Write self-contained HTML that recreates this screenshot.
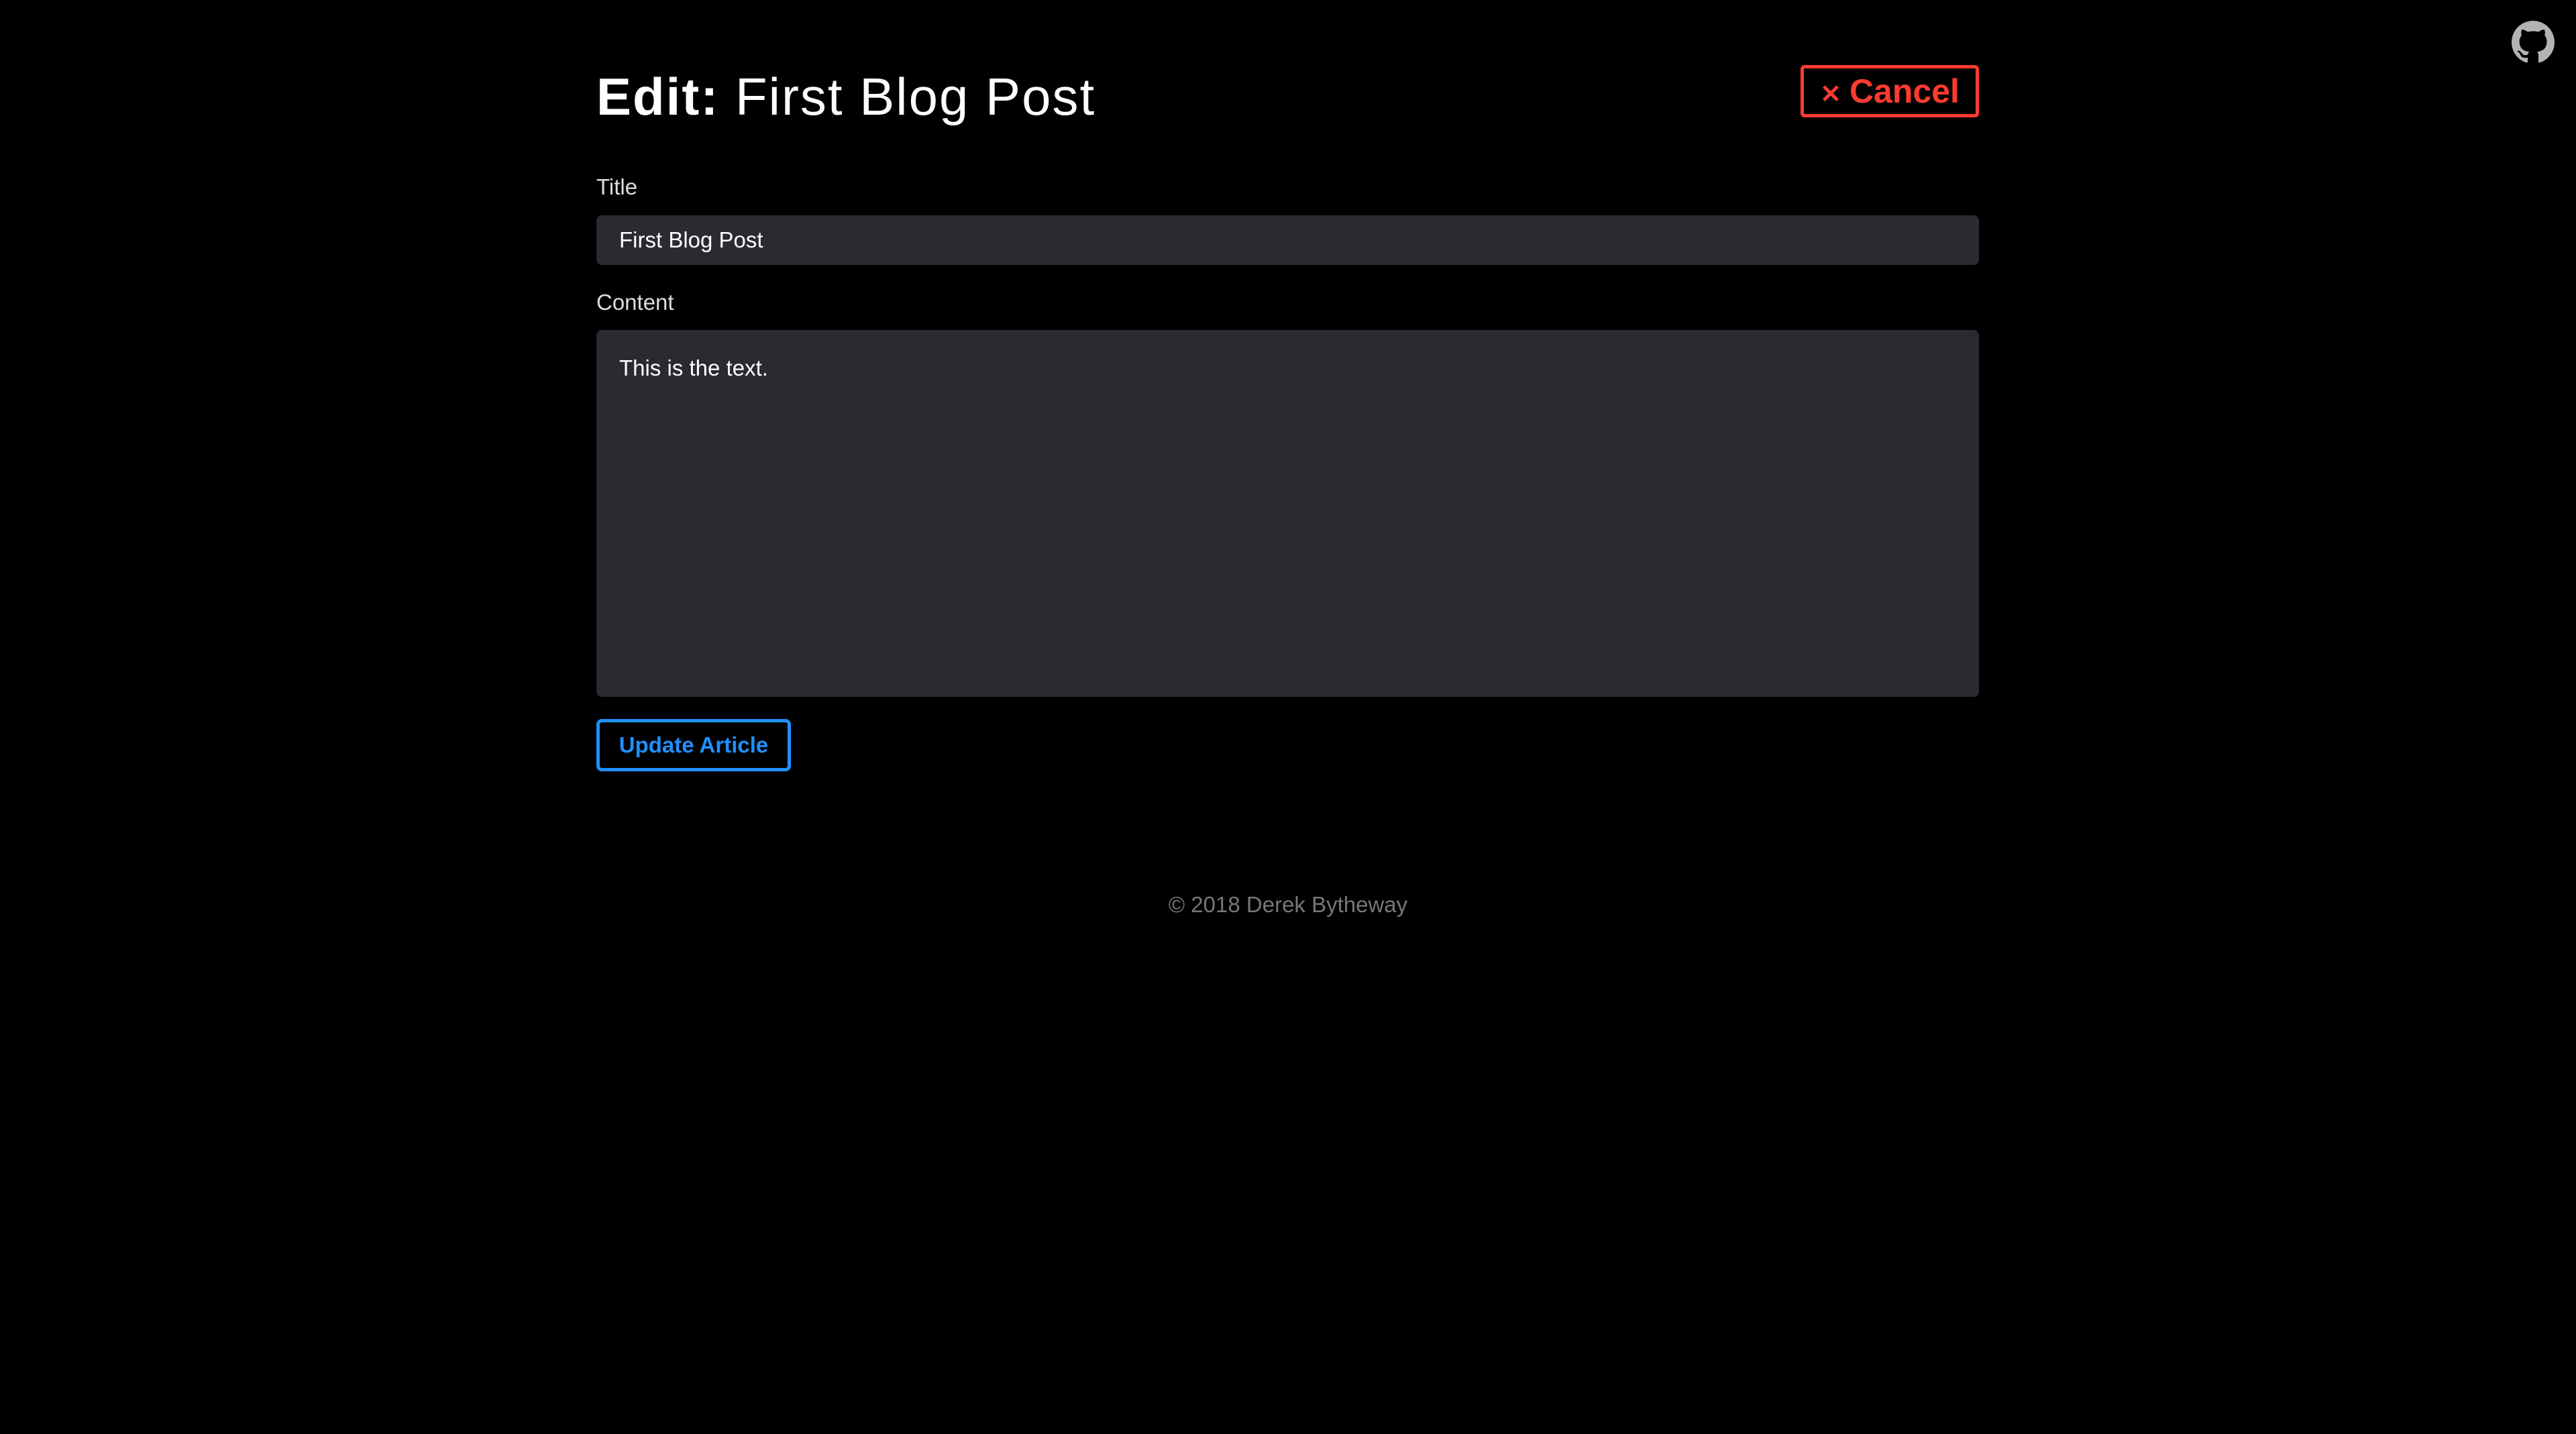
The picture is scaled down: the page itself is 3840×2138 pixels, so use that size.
<!DOCTYPE html>
<html><head><meta charset="utf-8"><style>
*{box-sizing:border-box;margin:0;padding:0}
html,body{width:3840px;height:2138px;background:#000;overflow:hidden;font-family:"Liberation Sans",sans-serif;color:#fff}
.abs{position:absolute}
h1{position:absolute;left:889px;top:96px;font-size:78px;font-weight:normal;line-height:96px;white-space:nowrap;letter-spacing:2px}
h1 b{font-weight:bold}
.cancel{left:2684px;top:97px;width:266px;height:78px;border:5px solid #ff3b30;border-radius:6px;color:#ff3b30;font-weight:bold;font-size:50px;line-height:68px;text-align:center}
.cancel span{font-size:38px;margin-right:12px}
.lbl{font-size:33px;color:#ddd;left:889px}
.field{left:889px;width:2061px;background:#2a2b30;border-radius:8px;font-size:33px;color:#fff;padding-left:34px}
.btn{left:889px;top:1072px;width:290px;height:78px;border:5px solid #1e90ff;border-radius:8px;color:#1e90ff;font-weight:bold;font-size:33px;line-height:68px;text-align:center}
.foot{left:0;width:3840px;top:1330px;text-align:center;font-size:33px;color:#777}
</style></head><body>
<h1><b>Edit:</b> First Blog Post</h1>
<div class="abs cancel"><span>✕</span>Cancel</div>
<div class="abs lbl" style="top:260px">Title</div>
<div class="abs field" style="top:321px;height:74px;line-height:74px">First Blog Post</div>
<div class="abs lbl" style="top:432px">Content</div>
<div class="abs field" style="top:492px;height:547px;padding-top:36px;line-height:42px">This is the text.</div>
<div class="abs btn">Update Article</div>
<div class="abs foot">© 2018 Derek Bytheway</div>
<svg class="abs" style="left:3744px;top:31px" width="64" height="64" viewBox="0 0 16 16"><path fill="#b3b3b3" d="M8 0C3.58 0 0 3.58 0 8c0 3.54 2.290 6.53 5.47 7.59.4.07.55-.17.55-.38 0-.19-.01-.82-.01-1.49-2.01.37-2.53-.49-2.69-.94-.09-.23-.48-.94-.82-1.13-.28-.15-.68-.52-.01-.53.63-.01 1.08.58 1.23.82.72 1.21 1.87.87 2.33.66.07-.52.28-.87.51-1.07-1.78-.2-3.64-.89-3.64-3.95 0-.87.31-1.59.82-2.15-.08-.2-.36-1.02.08-2.12 0 0 .67-.21 2.2.82.64-.18 1.32-.27 2-.27.68 0 1.36.09 2 .27 1.530-1.04 2.2-.82 2.2-.82.44 1.1.16 1.92.08 2.12.51.56.82 1.27.82 2.15 0 3.07-1.87 3.75-3.65 3.95.29.25.54.73.54 1.48 0 1.07-.01 1.93-.01 2.2 0 .21.15.46.55.38A8.013 8.013 0 0 0 16 8c0-4.42-3.58-8-8-8z"/></svg>
</body></html>
